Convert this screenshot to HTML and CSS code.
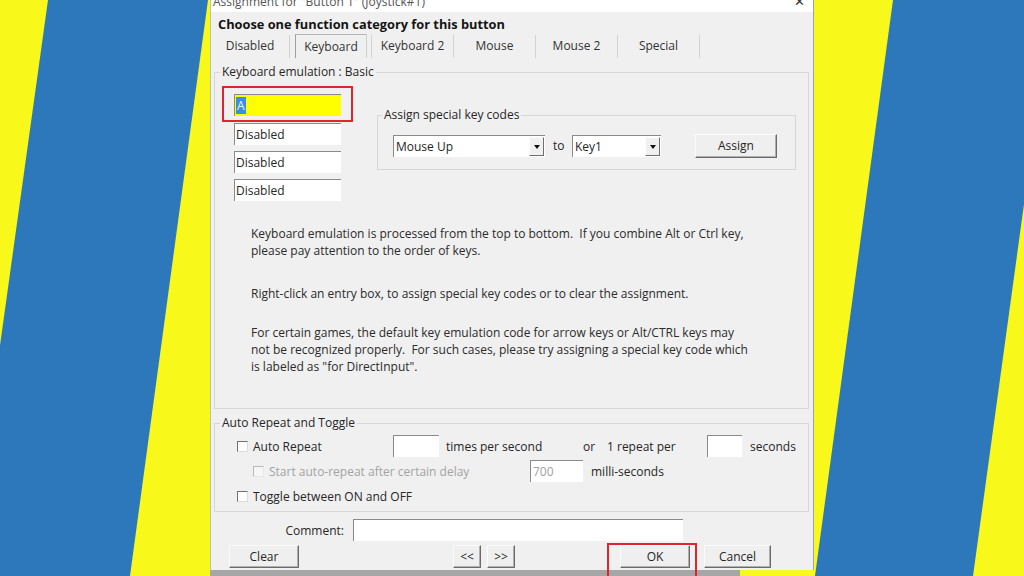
FILE: index.html
```html
<!DOCTYPE html>
<html lang="en">
<head>
<meta charset="utf-8">
<title>Assignment for Button 1</title>
<link rel="stylesheet" href="styles.css">
</head>
<body>
<svg class="bg" width="1024" height="576" viewBox="0 0 1024 576" aria-hidden="true">
  <rect width="1024" height="576" fill="#f8f81a"/>
  <polygon points="48,0 208,0 130,576 -32,576" fill="#2d77bb"/>
  <polygon points="893,0 1052,0 973,576 815,576" fill="#2d77bb"/>
</svg>
<div class="window">
  <div class="dialog">
    <div class="titlebar">
      <span class="title">Assignment for "Button 1" (Joystick#1)</span>
      <span class="close">✕</span>
    </div>
    <div class="heading">Choose one function category for this button</div>
    <div class="tabs">
      <div class="tab first">Disabled</div>
      <div class="tab active"><span>Keyboard</span></div>
      <div class="tab">Keyboard 2</div>
      <div class="tab">Mouse</div>
      <div class="tab">Mouse 2</div>
      <div class="tab">Special</div>
    </div>

    <fieldset class="group main">
      <legend>Keyboard emulation : Basic</legend>
      <div class="top">
        <div class="keys">
          <div class="highlight"><div class="field yellow"><span class="sel">A</span></div></div>
          <div class="field key k1">Disabled</div>
          <div class="field key">Disabled</div>
          <div class="field key">Disabled</div>
        </div>
        <fieldset class="group assign">
          <legend>Assign special key codes</legend>
          <div class="assign-row">
            <div class="combo w-mouse"><span class="txt">Mouse Up</span><span class="drop"></span></div>
            <span class="to">to</span>
            <div class="combo w-key"><span class="txt">Key1</span><span class="drop"></span></div>
            <div class="btn assign-btn">Assign</div>
          </div>
        </fieldset>
      </div>
      <div class="notes">
        <p>Keyboard emulation is processed from the top to bottom.&nbsp; If you combine Alt or Ctrl key,<br>please pay attention to the order of keys.</p>
        <p class="p2">Right-click an entry box, to assign special key codes or to clear the assignment.</p>
        <p class="p3">For certain games, the default key emulation code for arrow keys or Alt/CTRL keys may<br>not be recognized properly.&nbsp; For such cases, please try assigning a special key code which<br>is labeled as "for DirectInput".</p>
      </div>
    </fieldset>

    <fieldset class="group auto">
      <legend>Auto Repeat and Toggle</legend>
      <div class="rows">
        <div class="row r1">
          <span class="cbx c1"><span class="box"></span>Auto Repeat</span>
          <span class="inp i-times"></span>
          <span class="lbl l-times">times per second</span>
          <span class="lbl l-or">or</span>
          <span class="lbl l-per">1 repeat per</span>
          <span class="inp i-sec"></span>
          <span class="lbl l-sec">seconds</span>
        </div>
        <div class="row r2">
          <span class="cbx c2 disabled"><span class="box dis"></span>Start auto-repeat after certain delay</span>
          <span class="inp i-ms">700</span>
          <span class="lbl l-ms">milli-seconds</span>
        </div>
        <div class="row r3">
          <span class="cbx"><span class="box"></span>Toggle between ON and OFF</span>
        </div>
      </div>
    </fieldset>

    <div class="comment">
      <span class="comment-label">Comment:</span>
      <span class="inp comment-input"></span>
    </div>

    <div class="btns">
      <div class="btn b-clear">Clear</div>
      <div class="btn b-prev">&lt;&lt;</div>
      <div class="btn b-next">&gt;&gt;</div>
      <div class="ok-mark"><div class="btn b-ok">OK</div></div>
      <div class="btn b-cancel">Cancel</div>
    </div>
  </div>
  <div class="strip"></div>
</div>
</body>
</html>
```

FILE: styles.css
```css
* { box-sizing: border-box; }
html, body { margin: 0; padding: 0; }
body {
  width: 1024px;
  height: 576px;
  overflow: hidden;
  position: relative;
  font-family: "Open Sans", "Noto Sans", sans-serif;
  font-size: 12px;
  color: #262626;
}
.bg { position: absolute; left: 0; top: 0; z-index: -1; display: block; }

.window { margin-left: 210px; width: 604px; }
.dialog {
  position: relative;
  z-index: 1;
  height: 570px;
  background: #f0f0f0;
  border-left: 1px solid #b4c6ab;
  border-right: 1px solid #97a3ad;
}
.strip { width: 530px; height: 6px; background: #a6a6a6; }

.titlebar {
  height: 12px;
  background: #fff;
  overflow: hidden;
  display: flex;
  justify-content: space-between;
  padding: 0 8px 0 2px;
}
.title { font-size: 12px; line-height: 12px; margin-top: -4px; color: #555; }
.close { font-size: 13px; line-height: 12px; margin-top: -5px; color: #333; }

.heading {
  height: 23px;
  line-height: 24px;
  padding-left: 7px;
  font-weight: 700;
  font-size: 12.8px;
  color: #141414;
}

.tabs { display: flex; height: 23px; }
.tab {
  flex: none;
  width: 82px;
  border-right: 1px solid #d2d2d2;
  text-align: center;
  line-height: 21px;
  color: #333;
}
.tab.first { width: 79px; }
.tab.active { display: flex; padding: 0 4px 0 5px; }
.tab.active span {
  flex: 1;
  margin-top: -1px;
  border: 1px solid #cfcfcf;
  border-left-color: #a0a0a0;
  border-top-color: #b5b5b5;
  border-bottom: none;
  line-height: 24px;
}

.group {
  border: 1px solid #d6d6d6;
  margin: 0;
  padding: 0;
  min-width: 0;
}
.group legend {
  padding: 0 2px;
  margin-left: 5px;
  line-height: 16px;
  color: #262626;
}

.main { margin: 6px 4px 0 3px; height: 345px; }
.top { display: flex; align-items: flex-start; padding: 6px 0 0 7px; }
.keys { display: flex; flex-direction: column; width: 131px; flex: none; }
.highlight { border: 2px solid #e0252f; padding: 6px 10px 4px 10px; }
.field {
  height: 22px;
  background: #fff;
  border-top: 1px solid #8a8a8a;
  border-left: 1px solid #8a8a8a;
  line-height: 21px;
  padding-left: 1px;
  white-space: nowrap;
}
.key { width: 107px; margin-left: 12px; margin-top: 6px; }
.key.k1 { margin-top: 1px; }
.yellow { background: #ffff00; }
.sel { background: #3c8fdd; color: #eaf2ff; padding: 0 1px; }

.assign { margin: 21px 0 0 24px; width: 419px; height: 63px; flex: none; }
.assign legend { margin-left: 4px; }
.assign-row { display: flex; align-items: flex-start; padding: 12px 0 0 15px; }
.combo {
  display: flex;
  height: 22px;
  background: #fff;
  border-top: 1px solid #8a8a8a;
  border-left: 1px solid #8a8a8a;
  flex: none;
}
.combo .txt { flex: 1; padding-left: 2px; line-height: 21px; }
.drop {
  width: 15px;
  margin: 1px;
  border: 1px solid;
  border-color: #fdfdfd #6f6f6f #6f6f6f #fdfdfd;
  background: #f0f0f0;
  display: flex;
  align-items: center;
  justify-content: center;
}
.drop::after {
  content: "";
  border-left: 3px solid transparent;
  border-right: 3px solid transparent;
  border-top: 4px solid #111;
}
.w-mouse { width: 152px; }
.w-key { width: 89px; }
.to { width: 19px; margin-left: 8px; line-height: 22px; }

.btn {
  height: 24px;
  border: 1px solid;
  border-color: #fbfbfb #6a6a6a #6a6a6a #fbfbfb;
  background: #efefef;
  box-shadow: inset -1px -1px 0 #b0b0b0;
  text-align: center;
  line-height: 21px;
  color: #262626;
  flex: none;
}
.assign-btn { width: 82px; margin-left: 34px; margin-top: -1px; }

.notes { padding: 24px 0 0 36px; line-height: 17px; color: #2b2b2b; }
.notes p { margin: 0; }
.notes .p2 { margin-top: 26px; }
.notes .p3 { margin-top: 22px; }

.auto { margin: 6px 4px 0 3px; height: 97px; }
.rows { padding-top: 3px; }
.row { display: flex; align-items: center; height: 26px; }
.row.r1 { height: 24px; padding-left: 22px; }
.row.r2 { padding-left: 38px; }
.row.r3 { padding-left: 22px; height: 25px; }
.cbx { display: flex; align-items: center; flex: none; white-space: nowrap; }
.c1 { width: 156px; }
.c2 { width: 277px; }
.disabled { color: #a3a3a3; }
.box {
  width: 11px;
  height: 11px;
  background: #fff;
  border: 1px solid;
  border-color: #707070 #dcdcdc #dcdcdc #707070;
  margin-right: 5px;
  flex: none;
}
.box.dis { border-color: #b9b9b9 #e6e6e6 #e6e6e6 #b9b9b9; background: #f6f6f6; }
.inp {
  height: 22px;
  background: #fff;
  border-top: 1px solid #8a8a8a;
  border-left: 1px solid #8a8a8a;
  flex: none;
  line-height: 21px;
  padding-left: 2px;
}
.i-times { width: 46px; }
.l-times { width: 137px; margin-left: 7px; }
.l-or { width: 24px; }
.l-per { width: 100px; }
.i-sec { width: 35px; }
.l-sec { margin-left: 8px; }
.i-ms { width: 53px; color: #a0a0a0; }
.l-ms { margin-left: 8px; }

.comment { display: flex; align-items: center; margin-top: 7px; height: 22px; }
.comment-label { width: 133px; text-align: right; }
.comment-input { width: 330px; margin-left: 9px; }

.btns { display: flex; align-items: flex-start; margin-top: 2px; padding-left: 18px; }
.btns .btn { height: 23px; margin-top: 2px; }
.b-clear { width: 70px; }
.b-prev { width: 28px; margin-left: 154px; }
.b-next { width: 28px; margin-left: 6px; }
.ok-mark {
  width: 90px;
  height: 36px;
  margin-left: 92px;
  border: 2px solid #e0252f;
  padding: 0 5px 0 11px;
  flex: none;
}
.btns .ok-mark .b-ok { width: 70px; margin-top: 0; }
.b-cancel { width: 67px; margin-left: 7px; }
```
